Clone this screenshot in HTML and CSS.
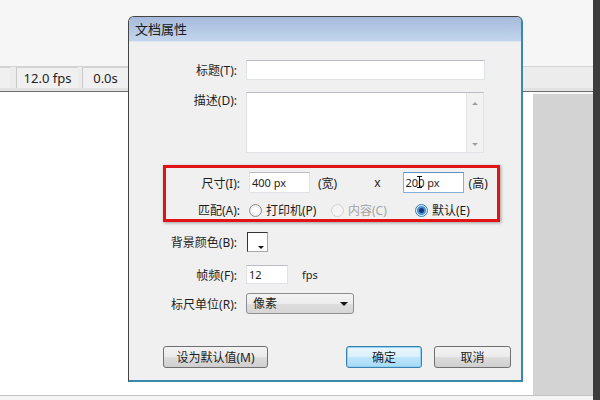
FILE: index.html
```html
<!DOCTYPE html>
<html lang="zh-CN">
<head>
  <meta charset="UTF-8" />
  <title>文档属性</title>
  <link rel="stylesheet" href="styles.css">
</head>
<body>
  <div class="app">
    <div class="toolbar"></div>
    <div class="statusbar">
      <div class="cell first"></div>
      <div class="cell fps">12.0 fps</div>
      <div class="cell time">0.0s</div>
    </div>
    <div class="workspace">
      <div class="canvas"></div>
      <div class="panel"></div>
    </div>
    <div class="bottom-bar"></div>
  </div>
  <div class="dark-strip"></div>

  <div class="dialog">
    <div class="dialog-title">文档属性</div>

    <div class="form">
      <div class="row row-title">
        <label class="label">标题(T):</label>
        <input class="field wide" type="text" value="">
      </div>

      <div class="row row-desc">
        <label class="label">描述(D):</label>
        <div class="textarea">
          <div class="scrollbar">
            <span class="arrow up"></span>
            <span class="arrow down"></span>
          </div>
        </div>
      </div>

      <div class="highlight">
        <div class="row row-size">
          <label class="label">尺寸(I):</label>
          <input class="field size" type="text" value="400 px">
          <span class="unit">(宽)</span>
          <span class="times">x</span>
          <div class="field-wrap">
            <input class="field size focused" type="text" value="200 px">
            <span class="ibeam"></span>
          </div>
          <span class="unit high">(高)</span>
        </div>
        <div class="row row-match">
          <label class="label">匹配(A):</label>
          <span class="option opt-printer"><span class="radio"></span>打印机(P)</span>
          <span class="option opt-content disabled"><span class="radio"></span>内容(C)</span>
          <span class="option"><span class="radio checked"></span>默认(E)</span>
        </div>
      </div>

      <div class="row row-bg">
        <label class="label">背景颜色(B):</label>
        <span class="swatch"></span>
      </div>

      <div class="row row-fps">
        <label class="label">帧频(F):</label>
        <input class="field small" type="text" value="12">
        <span class="fps-unit">fps</span>
      </div>

      <div class="row row-ruler">
        <label class="label">标尺单位(R):</label>
        <div class="select">像素<span class="select-arrow"></span></div>
      </div>
    </div>

    <div class="buttons">
      <button class="btn btn-default">设为默认值(M)</button>
      <button class="btn btn-ok">确定</button>
      <button class="btn btn-cancel">取消</button>
    </div>
  </div>
</body>
</html>
```

FILE: styles.css
```css
body {
  margin: 0;
  width: 600px;
  height: 400px;
  overflow: hidden;
  display: flex;
  background: #f6f6f6;
  font-family: "Noto Sans", "Noto Sans CJK SC", sans-serif;
  font-size: 12px;
  color: #1e1e1e;
}

input,
button {
  font: inherit;
  color: inherit;
}

/* background application */
.app {
  flex: 1;
  display: flex;
  flex-direction: column;
}

.toolbar {
  height: 66px;
  background: #f6f6f6;
  border-bottom: 1px solid #d4d4d4;
}

.statusbar {
  height: 21px;
  display: flex;
  background: #ececec;
  border-bottom: 3px solid #e2e2e2;
}

.cell {
  background: #f0f0f0;
  border-left: 1px solid #c9c9c9;
  border-top: 1px solid #d2d2d2;
  line-height: 20px;
  font-size: 13px;
  text-align: center;
  box-sizing: border-box;
}

.cell.first {
  width: 10px;
  border-left: none;
}

.cell.fps {
  width: 62px;
  margin-left: 6px;
}

.cell.time {
  width: 46px;
  margin-left: 4px;
}

.workspace {
  flex: 1;
  display: flex;
  border-top: 1px solid #6e6e6e;
}

.canvas {
  flex: 1;
  background: #ffffff;
}

.panel {
  width: 60px;
  margin-top: 2px;
  background: #d3d3d3;
}

.bottom-bar {
  height: 4px;
  background: #f5f5f5;
  border-top: 1px solid #c4c4c4;
}

.dark-strip {
  width: 7px;
  background: #3c3c3c;
}

/* dialog */
.dialog {
  position: absolute;
  left: 128px;
  top: 16px;
  width: 392px;
  height: 363px;
  background: #f0f0f0;
  border: 1px solid #444;
  border-right: 2px solid #3a88ab;
  border-bottom: 2px solid #3a88ab;
  border-radius: 6px 6px 0 0;
}

.dialog-title {
  height: 25px;
  line-height: 25px;
  padding-left: 6px;
  font-size: 13px;
  color: #1a1a1a;
  background: linear-gradient(#a6bbdb, #c3d5ed);
  border-radius: 5px 5px 0 0;
  border-bottom: 1px solid #dde6f2;
  box-sizing: border-box;
}

.form {
  padding: 18px 0 0 37px;
}

.row {
  display: flex;
  align-items: center;
}

.label {
  width: 71px;
  margin-right: 9px;
  text-align: right;
  white-space: nowrap;
}

.field {
  box-sizing: border-box;
  height: 100%;
  padding: 0 2px;
  font-size: 11px;
  background: #fff;
  border: 1px solid #dfe3e8;
  border-top-color: #b9bcc2;
  outline: none;
}

.row-title {
  height: 20px;
}

.field.wide {
  width: 239px;
}

.row-desc {
  height: 61px;
  margin-top: 12px;
  align-items: flex-start;
}

.row-desc .label {
  line-height: 17px;
}

.textarea {
  width: 238px;
  height: 61px;
  box-sizing: border-box;
  background: #fff;
  border: 1px solid #dfe3e8;
  border-top-color: #b9bcc2;
  display: flex;
  justify-content: flex-end;
}

.scrollbar {
  width: 16px;
  background: #f2f2f2;
  border-left: 1px solid #e4e4e4;
  display: flex;
  flex-direction: column;
  justify-content: space-between;
  align-items: center;
  padding: 9px 0 6px;
}

.arrow {
  width: 0;
  height: 0;
  border-left: 3px solid transparent;
  border-right: 3px solid transparent;
}

.arrow.up {
  border-bottom: 3px solid #a0a0a0;
}

.arrow.down {
  border-top: 3px solid #a0a0a0;
}

/* red mark around size and match */
.highlight {
  width: 328px;
  height: 47px;
  margin: 12px 0 0 -3px;
  padding: 4px 0 0 3px;
  border: 3px solid #e01414;
  box-shadow: 1px 1px 3px rgba(0, 0, 0, 0.35);
}

.row-size {
  height: 21px;
}

.field.size {
  width: 61px;
}

.unit {
  margin-left: 8px;
}

.times {
  margin-left: 37px;
}

.field-wrap {
  position: relative;
  height: 21px;
  margin-left: 22px;
}

.field.focused {
  border-color: #7fb1dc;
  border-top-color: #5c93c8;
}

.ibeam {
  position: absolute;
  left: 16px;
  top: 4px;
  width: 1px;
  height: 12px;
  background: #111;
}

.ibeam::before,
.ibeam::after {
  content: "";
  position: absolute;
  left: -2px;
  width: 5px;
  height: 1px;
  background: #111;
}

.ibeam::before {
  top: 0;
}

.ibeam::after {
  bottom: 0;
}

.unit.high {
  margin-left: 5px;
}

.row-match {
  height: 18px;
  margin-top: 8px;
}

.option {
  display: flex;
  align-items: center;
}

.opt-printer {
  width: 82px;
}

.opt-content {
  width: 84px;
}

.option.disabled {
  color: #a3a3a3;
}

.radio {
  width: 11px;
  height: 11px;
  margin-right: 4px;
  border-radius: 50%;
  border: 1px solid #8e8f8f;
  background: radial-gradient(circle, #ffffff 30%, #dedede);
}

.option.disabled .radio {
  border-color: #d2d2d2;
  background: #f4f4f4;
}

.radio.checked {
  border-color: #3c7fb1;
  background: radial-gradient(circle, #17396a 0 2px, #4a8fd4 3px 4px, #d8ebfa 5px);
}

.row-bg {
  height: 20px;
  margin-top: 10px;
}

.swatch {
  position: relative;
  width: 21px;
  height: 20px;
  margin-left: 1px;
  box-sizing: border-box;
  background: #fff;
  border: 1px solid #a6a6a6;
  border-top-color: #333;
  border-left-color: #333;
}

.swatch::after {
  content: "";
  position: absolute;
  right: 3px;
  bottom: 2px;
  border-left: 3px solid transparent;
  border-right: 3px solid transparent;
  border-top: 3px solid #111;
}

.row-fps {
  height: 19px;
  margin-top: 13px;
}

.field.small {
  width: 42px;
}

.fps-unit {
  margin-left: 14px;
  font-size: 11px;
}

.row-ruler {
  height: 21px;
  margin-top: 9px;
}

.select {
  position: relative;
  width: 108px;
  height: 21px;
  line-height: 19px;
  padding-left: 6px;
  box-sizing: border-box;
  border: 1px solid #8e8f8f;
  border-radius: 3px;
  background: linear-gradient(#f3f3f3 0, #ececec 50%, #dedede 51%, #d6d6d6 100%);
}

.select-arrow {
  position: absolute;
  right: 5px;
  top: 8px;
  border-left: 4px solid transparent;
  border-right: 4px solid transparent;
  border-top: 4px solid #111;
}

/* dialog buttons */
.buttons {
  display: flex;
  margin-top: 32px;
  padding-left: 34px;
}

.btn {
  height: 22px;
  padding: 0;
  border: 1px solid #707070;
  border-radius: 3px;
  background: linear-gradient(#f2f2f2 0, #ebebeb 50%, #dddddd 51%, #cfcfcf 100%);
  font-size: 12px;
}

.btn-default {
  width: 105px;
}

.btn-ok {
  width: 76px;
  margin-left: 78px;
  border-color: #3c7fb1;
  background: linear-gradient(#eaf6fd 0, #d9f0fc 50%, #bee6fd 51%, #a7d9f5 100%);
  box-shadow: inset 0 0 0 1px #8ed3f4;
}

.btn-cancel {
  width: 77px;
  margin-left: 12px;
}
```
